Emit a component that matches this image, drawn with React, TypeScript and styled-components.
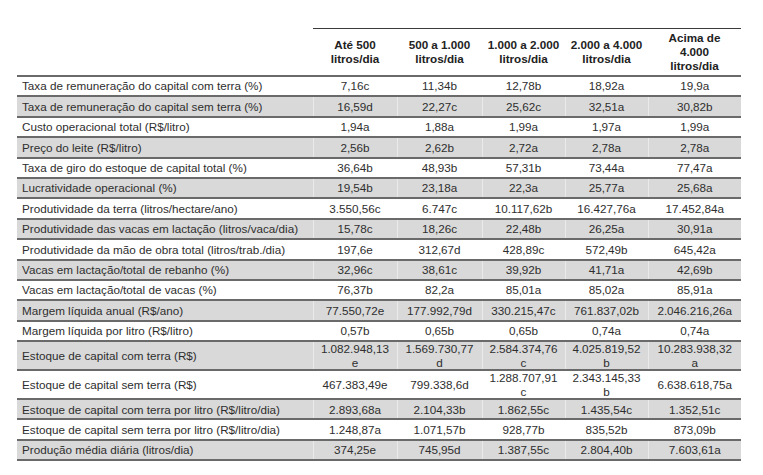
import React from 'react'
import styled, {createGlobalStyle} from 'styled-components'

const GlobalStyle = createGlobalStyle`
  html, body {
    margin: 0;
    padding: 0;
    background: #fff;
  }
  body {
    font-family: "Liberation Sans", Arial, sans-serif;
  }
`

const Page = styled.div`
  padding: 28px 0 0 17px;
`

const Table = styled.table`
  width: 724px;
  table-layout: fixed;
  border-collapse: collapse;
  font-size: 11.7px;
  color: #2e2e2e;
`

const Column = styled.col<{$width: number}>`
  width: ${p => p.$width}px;
`

const HeadCell = styled.th<{$empty?: boolean}>`
  height: 46px;
  padding: 0 4px;
  font-weight: bold;
  line-height: 14px;
  text-align: center;
  vertical-align: middle;
  color: #222;
  border-top: ${p => (p.$empty ? 'none' : '1px solid #3a3a3a')};
  border-bottom: 2px solid #6a6a6a;
`

const HeadLine = styled.div`
  white-space: nowrap;
`

const Row = styled.tr<{$shaded: boolean}>`
  background: ${p => (p.$shaded ? '#d9d9d9' : '#fff')};
`

const Label = styled.td`
  height: 18.4px;
  padding: 0 0 0 5px;
  line-height: 13.5px;
  text-align: left;
  white-space: nowrap;
  border-bottom: 2px solid #6a6a6a;
`

const Value = styled.td`
  height: 18.4px;
  padding: 0 6px;
  line-height: 13.5px;
  text-align: center;
  word-break: break-all;
  border-bottom: 2px solid #6a6a6a;
  border-left: 1px solid rgba(255, 255, 255, 0.45);
`

const columnWidths = [296, 84, 85, 83, 83, 93]

const headers = [
  ['Até 500', 'litros/dia'],
  ['500 a 1.000', 'litros/dia'],
  ['1.000 a 2.000', 'litros/dia'],
  ['2.000 a 4.000', 'litros/dia'],
  ['Acima de', '4.000', 'litros/dia'],
]

const rows: [string, string[]][] = [
  ['Taxa de remuneração do capital com terra (%)', ['7,16c', '11,34b', '12,78b', '18,92a', '19,9a']],
  ['Taxa de remuneração do capital sem terra (%)', ['16,59d', '22,27c', '25,62c', '32,51a', '30,82b']],
  ['Custo operacional total (R$/litro)', ['1,94a', '1,88a', '1,99a', '1,97a', '1,99a']],
  ['Preço do leite (R$/litro)', ['2,56b', '2,62b', '2,72a', '2,78a', '2,78a']],
  ['Taxa de giro do estoque de capital total (%)', ['36,64b', '48,93b', '57,31b', '73,44a', '77,47a']],
  ['Lucratividade operacional (%)', ['19,54b', '23,18a', '22,3a', '25,77a', '25,68a']],
  ['Produtividade da terra (litros/hectare/ano)', ['3.550,56c', '6.747c', '10.117,62b', '16.427,76a', '17.452,84a']],
  ['Produtividade das vacas em lactação (litros/vaca/dia)', ['15,78c', '18,26c', '22,48b', '26,25a', '30,91a']],
  ['Produtividade da mão de obra total (litros/trab./dia)', ['197,6e', '312,67d', '428,89c', '572,49b', '645,42a']],
  ['Vacas em lactação/total de rebanho (%)', ['32,96c', '38,61c', '39,92b', '41,71a', '42,69b']],
  ['Vacas em lactação/total de vacas (%)', ['76,37b', '82,2a', '85,01a', '85,02a', '85,91a']],
  ['Margem líquida anual (R$/ano)', ['77.550,72e', '177.992,79d', '330.215,47c', '761.837,02b', '2.046.216,26a']],
  ['Margem líquida por litro (R$/litro)', ['0,57b', '0,65b', '0,65b', '0,74a', '0,74a']],
  ['Estoque de capital com terra (R$)', ['1.082.948,13e', '1.569.730,77d', '2.584.374,76c', '4.025.819,52b', '10.283.938,32a']],
  ['Estoque de capital sem terra (R$)', ['467.383,49e', '799.338,6d', '1.288.707,91c', '2.343.145,33b', '6.638.618,75a']],
  ['Estoque de capital com terra por litro (R$/litro/dia)', ['2.893,68a', '2.104,33b', '1.862,55c', '1.435,54c', '1.352,51c']],
  ['Estoque de capital sem terra por litro (R$/litro/dia)', ['1.248,87a', '1.071,57b', '928,77b', '835,52b', '873,09b']],
  ['Produção média diária (litros/dia)', ['374,25e', '745,95d', '1.387,55c', '2.804,40b', '7.603,61a']],
]

const App = () => (
  <Page>
    <GlobalStyle/>
    <Table>
      <colgroup>
        {columnWidths.map((w, i) => <Column key={i} $width={w}/>)}
      </colgroup>
      <thead>
        <tr>
          <HeadCell $empty/>
          {headers.map((lines, i) => (
            <HeadCell key={i}>
              {lines.map((l, j) => <HeadLine key={j}>{l}</HeadLine>)}
            </HeadCell>
          ))}
        </tr>
      </thead>
      <tbody>
        {rows.map(([label, values], i) => (
          <Row key={label} $shaded={i % 2 === 1}>
            <Label>{label}</Label>
            {values.map((v, j) => <Value key={j}>{v}</Value>)}
          </Row>
        ))}
      </tbody>
    </Table>
  </Page>
)

export default App
